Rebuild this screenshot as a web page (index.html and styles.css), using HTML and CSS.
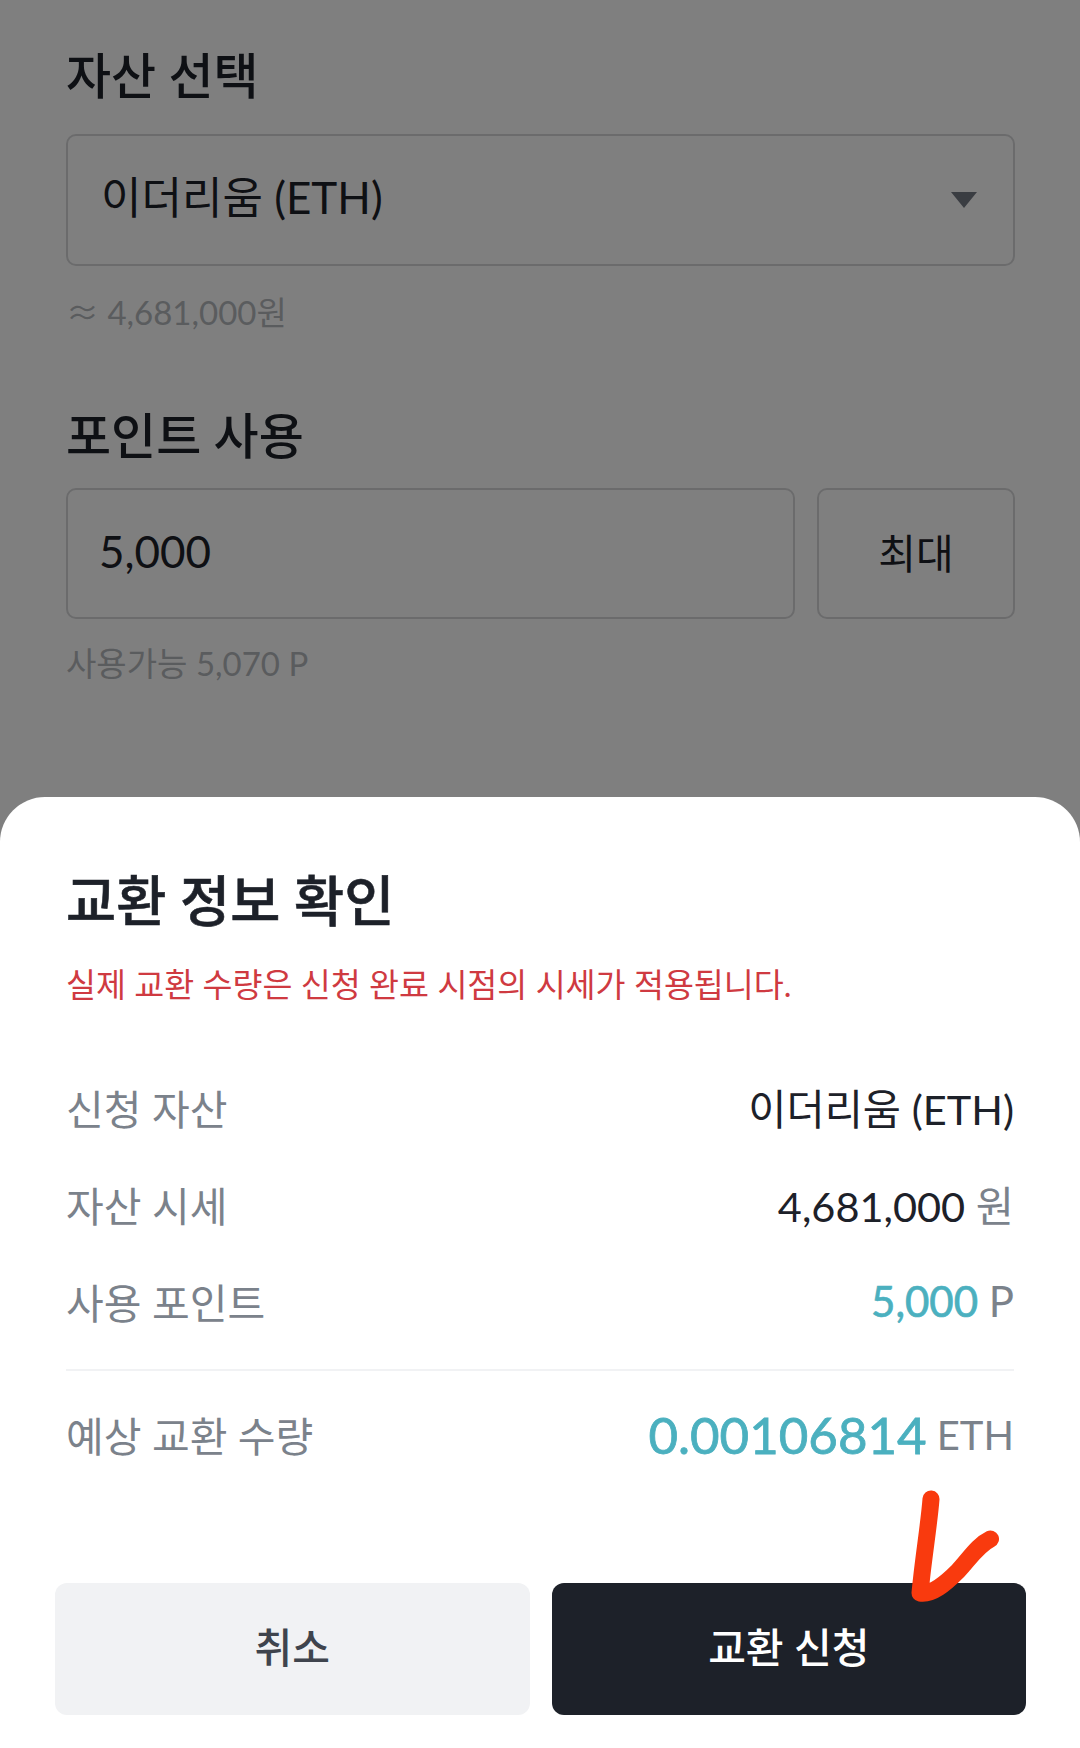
FILE: index.html
```html
<!DOCTYPE html>
<html lang="ko">

<head>
    <meta charset="UTF-8">
    <meta name="viewport" content="width=device-width, initial-scale=1.0">
    <title>교환 정보 확인</title>
    <link rel="stylesheet" href="styles.css">
</head>

<body>
    <main class="form">
        <h2 class="form-label">자산 선택</h2>
        <div class="select-box">
            <span class="select-text">이더리움 (ETH)</span>
            <svg class="select-arrow" width="26" height="16" viewBox="0 0 26 16">
                <polygon points="0,0 26,0 13,16" />
            </svg>
        </div>
        <p class="hint hint-rate"><span class="approx">≈</span> 4,681,000원</p>

        <h2 class="form-label form-label-point">포인트 사용</h2>
        <div class="point-row">
            <div class="point-input">5,000</div>
            <div class="max-button">최대</div>
        </div>
        <p class="hint hint-point">사용가능 5,070 P</p>
    </main>

    <!-- 바텀시트 뒤 어두운 배경 -->
    <div class="dim"></div>

    <section class="sheet">
        <h1 class="sheet-title">교환 정보 확인</h1>
        <p class="sheet-notice">실제 교환 수량은 신청 완료 시점의 시세가 적용됩니다.</p>

        <div class="info-rows">
            <div class="info-row">
                <span class="info-name">신청 자산</span>
                <span class="info-value">이더리움 (ETH)</span>
            </div>
            <div class="info-row">
                <span class="info-name">자산 시세</span>
                <span class="info-value">4,681,000 <span class="unit">원</span></span>
            </div>
            <div class="info-row">
                <span class="info-name">사용 포인트</span>
                <span class="info-value teal">5,000 <span class="unit">P</span></span>
            </div>
        </div>

        <div class="total-row">
            <span class="info-name">예상 교환 수량</span>
            <span class="total-value">0.00106814 <span class="unit">ETH</span></span>
        </div>

        <div class="sheet-buttons">
            <button class="btn btn-cancel">취소</button>
            <button class="btn btn-submit">교환 신청</button>
        </div>

        <!-- 손으로 그린 체크 표시 -->
        <svg class="check-mark" width="300" height="278" viewBox="0 0 300 278">
            <path d="M151 29 C149 55 143 90 140 123 C152 125 165 114 178 101 C190 88 198 75 210.5 69" />
        </svg>
    </section>
</body>

</html>
```

FILE: styles.css
```css
* {
    box-sizing: border-box;
}

html,
body {
    margin: 0;
    height: 100%;
}

body {
    position: relative;
    overflow: hidden;
    background: #fff;
    color: #1d2129;
    font-family: Lato, "Noto Sans CJK KR", sans-serif;
}

h1,
h2,
p {
    margin: 0;
}

.form {
    padding: 41px 65px 0 66px;
}

.form-label {
    font-size: 49px;
    font-weight: 500;
    line-height: 68px;
}

.form-label-point {
    margin-top: 66px;
}

.select-box {
    display: flex;
    align-items: center;
    justify-content: space-between;
    height: 132px;
    margin-top: 25px;
    padding: 0 36px 0 33px;
    border: 2px solid #d6d7d9;
    border-radius: 10px;
}

.select-text {
    padding-bottom: 11px;
    font-size: 44px;
}

.select-arrow {
    fill: #757a85;
}

.hint {
    color: #b5b8bc;
    font-size: 33px;
    line-height: 46px;
}

.approx {
    font-family: "Noto Sans CJK KR", sans-serif;
}

.hint-rate {
    margin-top: 22px;
}

.hint-point {
    margin-top: 21px;
}

.point-row {
    display: flex;
    gap: 22px;
    margin-top: 19px;
}

.point-input {
    flex: 1;
    height: 131px;
    padding-left: 31px;
    border: 2px solid #d6d7d9;
    border-radius: 10px;
    font-size: 44px;
    line-height: 123px;
}

.max-button {
    width: 198px;
    height: 131px;
    border: 2px solid #d6d7d9;
    border-radius: 10px;
    font-size: 41px;
    line-height: 127px;
    text-align: center;
}

.dim {
    position: absolute;
    inset: 0;
    background: rgba(0, 0, 0, 0.5);
}

.sheet {
    position: absolute;
    left: 0;
    right: 0;
    bottom: 0;
    height: 951px;
    padding: 61px 66px 0;
    background: #fff;
    border-radius: 45px 45px 0 0;
}

.sheet-title {
    font-size: 54.5px;
    font-weight: 500;
    line-height: 84px;
    -webkit-text-stroke: 0.6px #1d2129;
}

.sheet-notice {
    margin-top: 19px;
    color: #cf3a41;
    font-size: 32.6px;
    line-height: 48px;
}

.info-rows {
    margin-top: 49px;
    padding-bottom: 20px;
    border-bottom: 2px solid #f1f2f4;
}

.info-row {
    display: flex;
    align-items: center;
    justify-content: space-between;
    height: 97px;
}

.info-name {
    color: #7b828b;
    font-size: 41px;
}

.info-value {
    font-size: 41.5px;
}

.unit {
    color: #7b828b;
    font-weight: 400;
    -webkit-text-stroke: 0;
}

.teal {
    color: #4bb0bf;
    font-size: 42px;
    -webkit-text-stroke: 0.7px #4bb0bf;
}

.total-row {
    display: flex;
    align-items: center;
    justify-content: space-between;
    height: 126px;
}

.total-value {
    color: #4bb0bf;
    font-size: 51px;
    word-spacing: -3px;
    -webkit-text-stroke: 0.8px #4bb0bf;
}

.total-value .unit {
    position: relative;
    top: -4px;
    font-size: 40px;
}

.sheet-buttons {
    position: absolute;
    left: 55px;
    right: 54px;
    bottom: 33px;
    display: flex;
    gap: 22px;
}

.btn {
    flex: 1;
    height: 132px;
    padding: 0 0 8px;
    border: none;
    border-radius: 12px;
    font-family: inherit;
    font-size: 41px;
    font-weight: 500;
}

.btn-cancel {
    background: #f1f2f4;
    color: #3f444d;
}

.btn-submit {
    background: #1d2129;
    color: #fff;
}

.check-mark {
    position: absolute;
    right: 0;
    bottom: 0;
    fill: none;
    stroke: #f93a0e;
    stroke-width: 17;
    stroke-linecap: round;
    stroke-linejoin: round;
}
```
